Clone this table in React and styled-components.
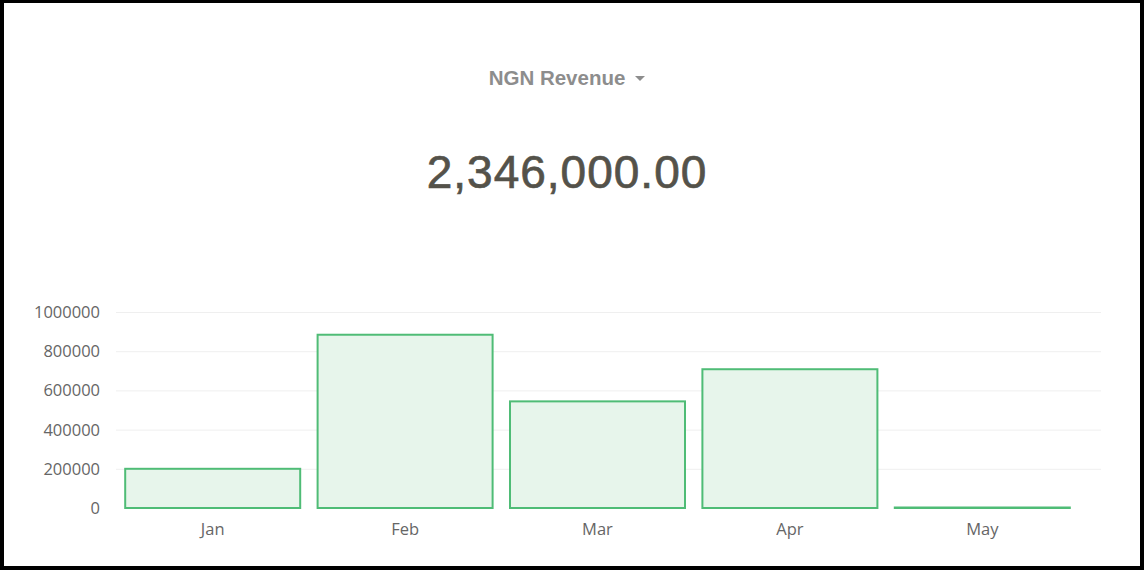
import React from "react";
import styled, { createGlobalStyle } from "styled-components";

const GlobalStyle = createGlobalStyle`
  html, body {
    margin: 0;
    padding: 0;
    background: #ffffff;
  }
`

const Frame = styled.div`
  box-sizing: border-box;
  width: 1144px;
  height: 570px;
  border-style: solid;
  border-color: #000;
  border-width: 3px 4px 4px 4px;
  background: #fff;
  display: flex;
  flex-direction: column;
`

const Header = styled.div`
  display: flex;
  flex-direction: column;
  align-items: center;
  padding: 63px 10px 0 0;
`

const Picker = styled.button`
  display: flex;
  align-items: center;
  gap: 10px;
  border: none;
  background: none;
  padding: 0;
  font-family: "Liberation Sans", Arial, sans-serif;
  font-weight: 700;
  font-size: 20.5px;
  line-height: 23px;
  color: #8d8d8d;
  cursor: pointer;
`

const Caret = styled.span`
  width: 0;
  height: 0;
  border-left: 5.5px solid transparent;
  border-right: 5.5px solid transparent;
  border-top: 5.5px solid #8d8d8d;
  margin-top: 2px;
`

const Amount = styled.div`
  margin-top: 57px;
  font-family: "Liberation Sans", Arial, sans-serif;
  font-size: 46px;
  line-height: 53px;
  color: #54524a;
  letter-spacing: 1px;
  -webkit-text-stroke: 0.7px #54524a;
`

const ChartBox = styled.div`
  margin-top: auto;
  height: 270px;
`

const AxisText = styled.text`
  font-family: "Open Sans", "Noto Sans", sans-serif;
  font-size: 16.5px;
  fill: #666666;
`

const data = [
  { month: "Jan", value: 200000 },
  { month: "Feb", value: 884000 },
  { month: "Mar", value: 544000 },
  { month: "Apr", value: 708000 },
  { month: "May", value: 0 },
]

const ticks = [1000000, 800000, 600000, 400000, 200000, 0]

const zeroY = 212
const topY = 16
const plotLeft = 112
const plotRight = 1097
const firstCenter = 208.7
const step = 192.4
const barWidth = 175

const yFor = (v) => zeroY - ((zeroY - topY) * v) / 1000000

const RevenueChart = () => (
  <svg width="1136" height="270" viewBox="0 0 1136 270">
    {ticks.filter((t) => t > 0).map((t) => (
      <line
        key={t}
        x1={plotLeft}
        x2={plotRight}
        y1={yFor(t) + 0.5}
        y2={yFor(t) + 0.5}
        stroke="#efefef"
        strokeWidth="1"
      />
    ))}
    {ticks.map((t) => (
      <AxisText key={t} x="96" y={yFor(t) + 6} textAnchor="end">
        {t}
      </AxisText>
    ))}
    {data.map((d, i) => {
      const cx = firstCenter + i * step
      const y = Math.min(yFor(d.value), zeroY - 0.5)
      return (
        <g key={d.month}>
          <rect
            x={cx - barWidth / 2}
            y={y}
            width={barWidth}
            height={zeroY - y}
            fill="#e7f5eb"
            stroke="#4fbc76"
            strokeWidth="2"
          />
          <AxisText x={cx} y="239" textAnchor="middle">
            {d.month}
          </AxisText>
        </g>
      )
    })}
  </svg>
)

const App = () => (
  <>
    <GlobalStyle />
    <Frame>
      <Header>
        <Picker>
          NGN Revenue
          <Caret />
        </Picker>
        <Amount>2,346,000.00</Amount>
      </Header>
      <ChartBox>
        <RevenueChart />
      </ChartBox>
    </Frame>
  </>
)

export default App
